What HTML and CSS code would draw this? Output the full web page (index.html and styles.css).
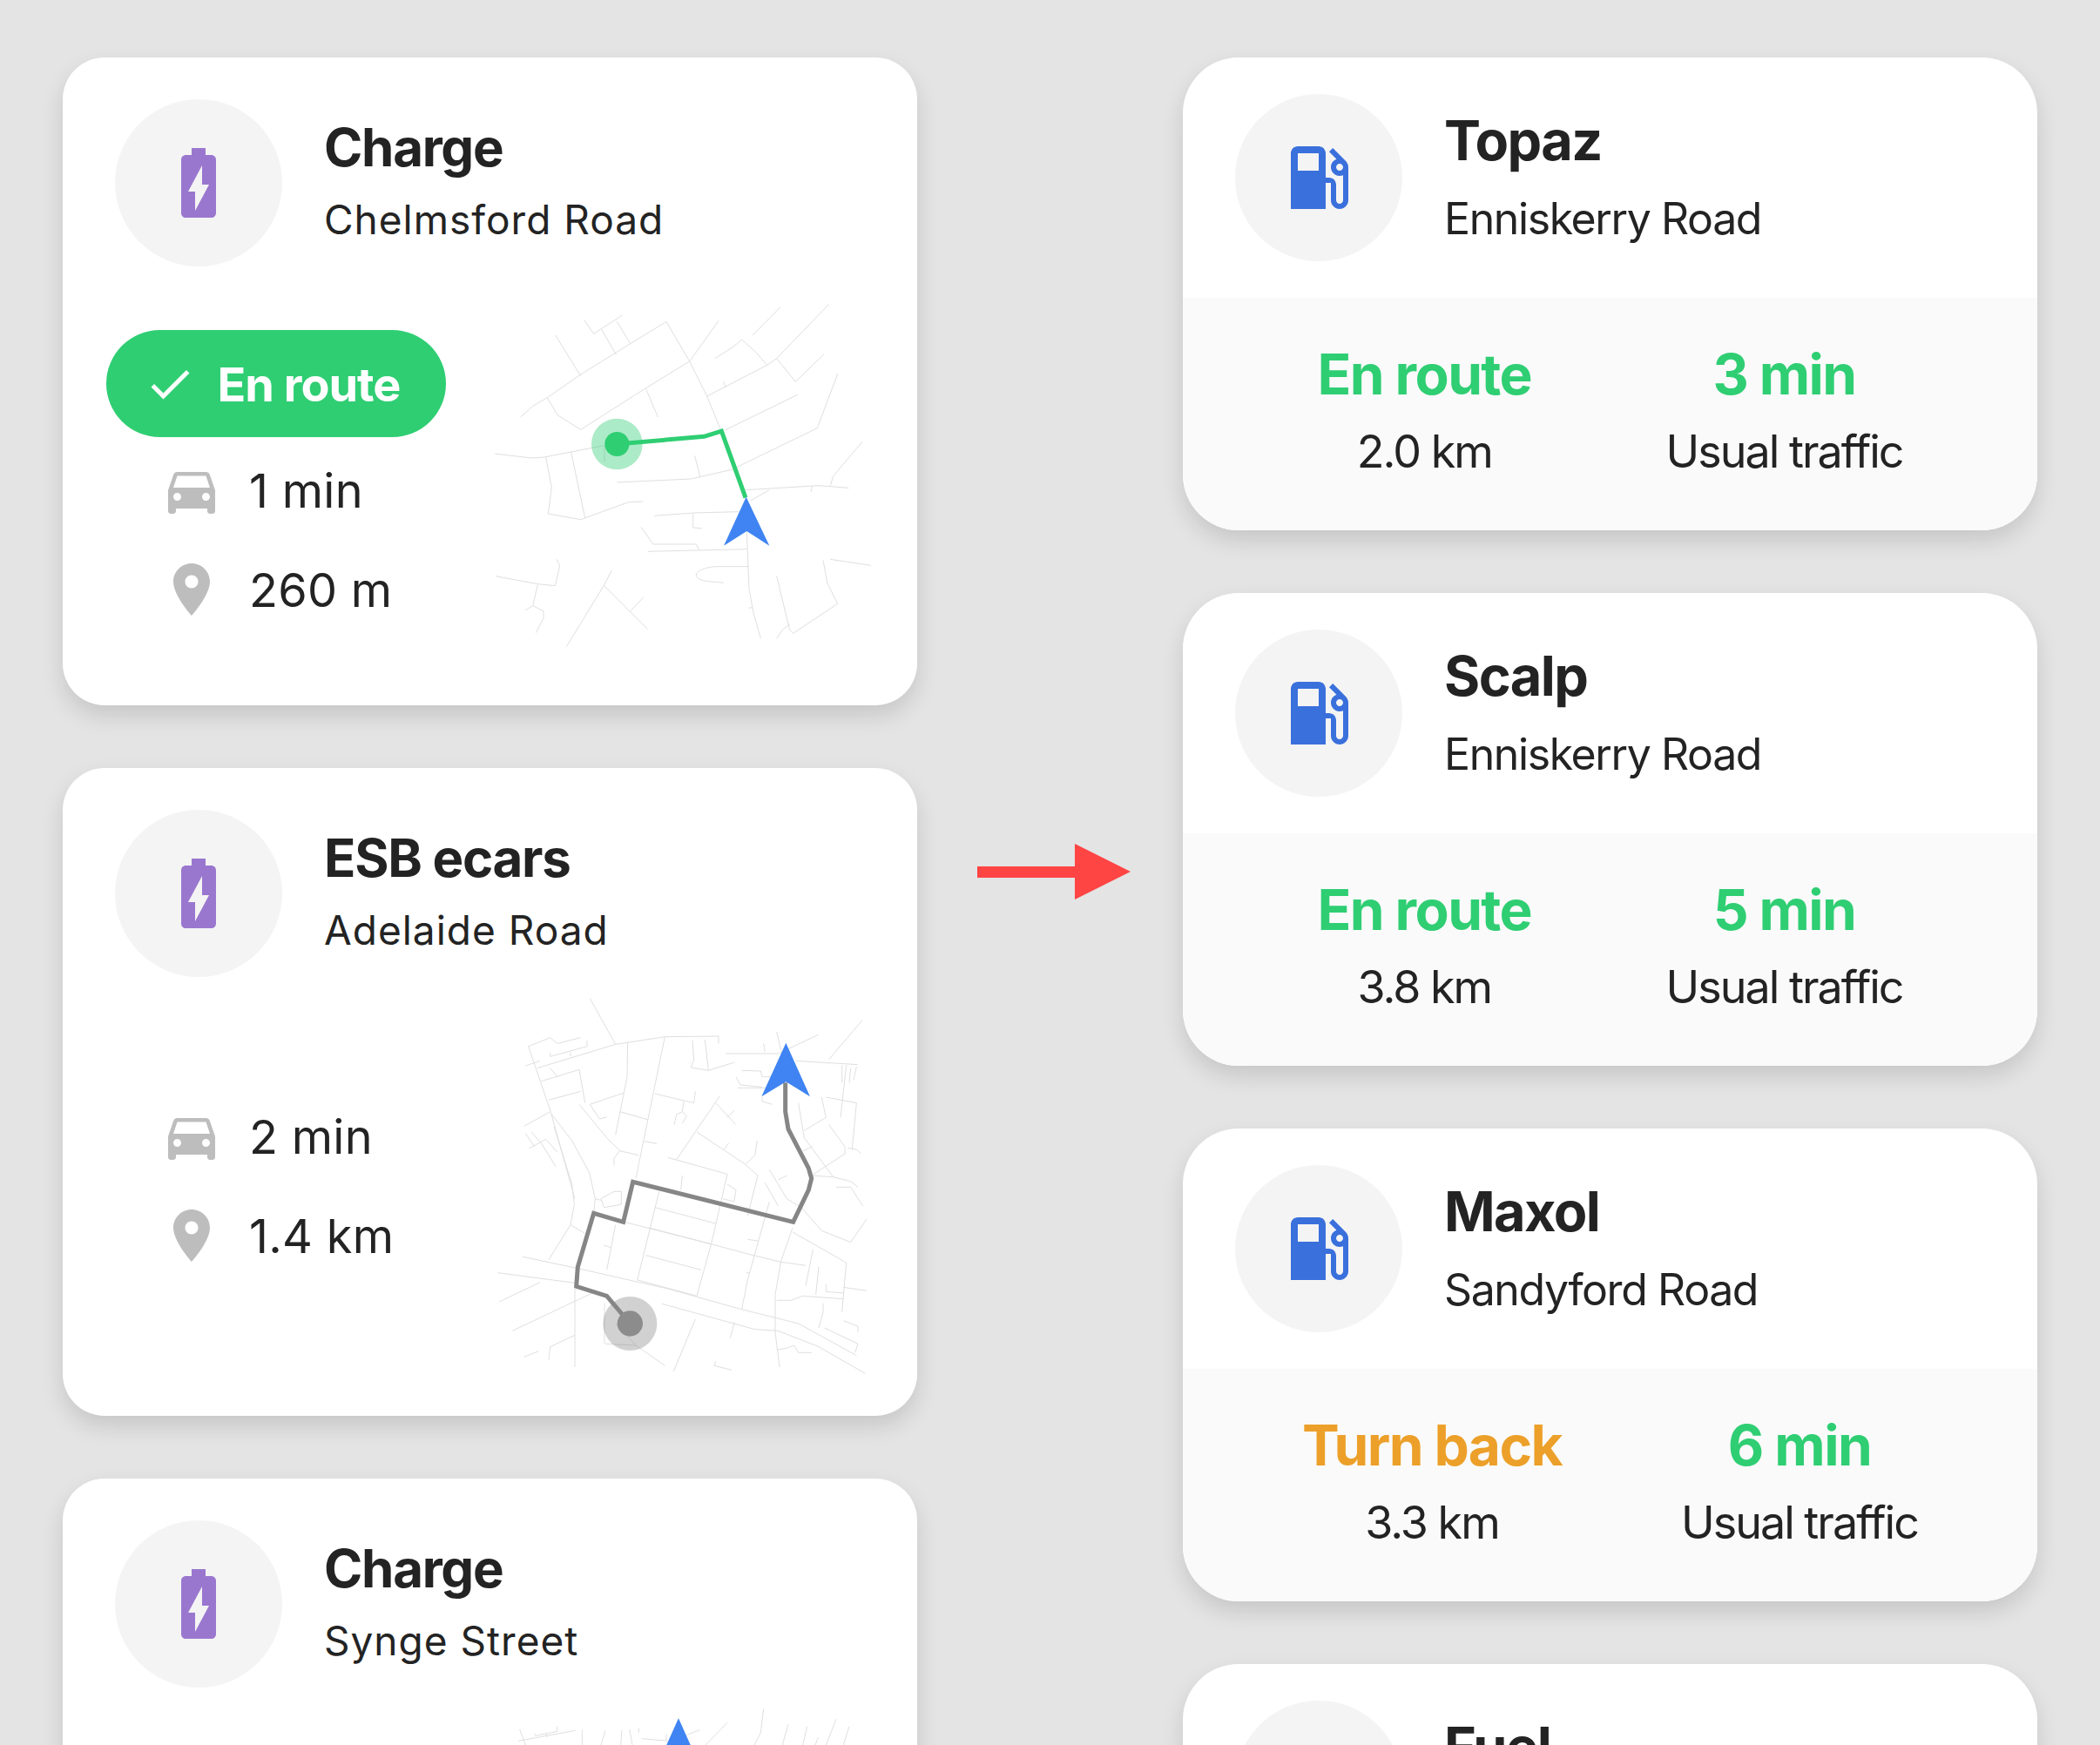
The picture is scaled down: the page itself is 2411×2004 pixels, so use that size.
FILE: index.html
```html
<!DOCTYPE html>
<html lang="en">
<head>
<meta charset="utf-8">
<title>Charging and fuel stops</title>
<link rel="stylesheet" href="styles.css">
</head>
<body>
<svg class="defs" aria-hidden="true">
  <symbol id="i-battery" viewBox="0 0 24 24"><path d="M15.67 4H14V2h-4v2H8.33C7.6 4 7 4.6 7 5.33v15.33C7 21.4 7.6 22 8.33 22h7.33c.74 0 1.34-.6 1.34-1.33V5.33C17 4.6 16.4 4 15.67 4zM11 20v-5.5H9L13 7v5.5h2L11 20z"/></symbol>
  <symbol id="i-fuel" viewBox="0 0 24 24"><path d="M19.77 7.23l.01-.01-3.72-3.72L15 4.56l2.11 2.11c-.94.36-1.61 1.26-1.61 2.33 0 1.38 1.12 2.5 2.5 2.5.36 0 .69-.08 1-.21v7.21c0 .55-.45 1-1 1s-1-.45-1-1V14c0-1.1-.9-2-2-2h-1V5c0-1.1-.9-2-2-2H6c-1.1 0-2 .9-2 2v16h10v-7.5h1.5v5c0 1.38 1.12 2.5 2.5 2.5s2.5-1.12 2.5-2.5V9c0-.69-.28-1.32-.73-1.77zM12 10H6V5h6v5zm6 0c-.55 0-1-.45-1-1s.45-1 1-1 1 .45 1 1-.45 1-1 1z"/></symbol>
  <symbol id="i-car" viewBox="0 0 24 24"><path d="M18.92 6.01C18.72 5.42 18.16 5 17.5 5h-11c-.66 0-1.21.42-1.42 1.01L3 12v8c0 .55.45 1 1 1h1c.55 0 1-.45 1-1v-1h12v1c0 .55.45 1 1 1h1c.55 0 1-.45 1-1v-8l-2.08-5.99zM6.5 16c-.83 0-1.5-.67-1.5-1.5S5.67 13 6.5 13s1.5.67 1.5 1.5S7.33 16 6.5 16zm11 0c-.83 0-1.5-.67-1.5-1.5s.67-1.5 1.5-1.5 1.5.67 1.5 1.5-.67 1.5-1.5 1.5zM5 11l1.5-4.5h11L19 11H5z"/></symbol>
  <symbol id="i-place" viewBox="0 0 24 24"><path d="M12 2C8.13 2 5 5.13 5 9c0 5.25 7 13 7 13s7-7.75 7-13c0-3.87-3.13-7-7-7zm0 9.5c-1.38 0-2.5-1.12-2.5-2.5s1.12-2.5 2.5-2.5 2.5 1.12 2.5 2.5-1.12 2.5-2.5 2.5z"/></symbol>
  <symbol id="i-check" viewBox="0 0 24 24"><path d="M9 16.17L4.83 12l-1.42 1.41L9 19 21 7l-1.41-1.41z"/></symbol>
</svg>

<main class="board">
  <section class="column">
    <article class="card">
      <header class="head">
        <span class="badge"><svg class="icon-lg charge"><use href="#i-battery"/></svg></span>
        <div class="names"><h2 class="title">Charge</h2><p class="place">Chelmsford Road</p></div>
      </header>
      <div class="body">
        <div class="facts">
          <div class="pill"><svg class="icon-check"><use href="#i-check"/></svg><span>En route</span></div>
          <div class="fact"><svg class="icon-md"><use href="#i-car"/></svg><span>1 min</span></div>
          <div class="fact"><svg class="icon-md"><use href="#i-place"/></svg><span>260 m</span></div>
        </div>
        <svg class="map" viewBox="0 -72 1440 1440" aria-hidden="true">
          <g class="roads">
            <polyline points="173,447 214,410 265,380 380,300 550,195 675,118 755,255 815,375 862,490"/>
            <polyline points="265,380 300,440 340,465 380,490 600,350 755,255 855,115"/>
            <polyline points="293,165 380,305"/>
            <polyline points="392,112 425,160 523,96"/>
            <polyline points="452,145 502,232"/>
            <polyline points="505,118 552,195"/>
            <polyline points="605,350 646,447"/>
            <polyline points="815,375 1022,268 1055,245 1235,58"/>
            <polyline points="843,245 905,205 935,180 985,225 1022,268"/>
            <polyline points="1055,245 1120,325 1218,230"/>
            <polyline points="972,165 1068,68"/>
            <polyline points="872,325 880,345"/>
            <polyline points="875,493 1127,370"/>
            <polyline points="85,573 210,588 255,585 460,545"/>
            <polyline points="260,585 280,690 268,780 380,800 545,740 595,738"/>
            <polyline points="347,567 395,795"/>
            <polyline points="462,545 462,600"/>
            <polyline points="505,672 760,660 900,628 1195,485 1265,298"/>
            <polyline points="773,580 792,655"/>
            <polyline points="948,698 1200,683 1303,691"/>
            <polyline points="965,735 1030,698"/>
            <polyline points="1240,683 1250,650 1350,532"/>
            <polyline points="1178,685 1173,705"/>
            <polyline points="633,787 770,777 925,773"/>
            <polyline points="767,780 767,828 798,830"/>
            <polyline points="588,826 630,885 778,885 788,905"/>
            <polyline points="612,910 952,902"/>
            <polyline points="952,840 960,1040 975,1120 1000,1210"/>
            <path d="M872 1018C830 1012 778 1015 778 990C778 975 820 962 850 962H958"/>
            <polyline points="958,1105 970,1103"/>
            <polyline points="1055,995 1100,1180 1112,1192 1265,1090 1230,1020 1215,940"/>
            <polyline points="1100,1160 1075,1180 1055,1210"/>
            <polyline points="1240,937 1380,958"/>
            <polyline points="87,995 232,1022 292,1028 308,960 298,937"/>
            <polyline points="232,1025 215,1097 190,1112"/>
            <polyline points="215,1097 252,1115 252,1140 226,1190"/>
            <polyline points="487,975 460,1027 331,1238"/>
            <polyline points="460,1027 610,1177"/>
            <polyline points="552,1115 597,1067"/>
          </g>
          <circle class="halo-green" cx="505" cy="540" r="88"/>
          <polyline class="route route-green" points="505,540 805,514 865,495 948,725"/>
          <circle class="dot-green" cx="505" cy="540" r="42"/>
          <polygon class="nav" points="950,722 1030,890 952,840 873,890"/>
        </svg>
      </div>
    </article>

    <article class="card">
      <header class="head">
        <span class="badge"><svg class="icon-lg charge"><use href="#i-battery"/></svg></span>
        <div class="names"><h2 class="title">ESB ecars</h2><p class="place">Adelaide Road</p></div>
      </header>
      <div class="body">
        <div class="facts">
          <div class="fact"><svg class="icon-md"><use href="#i-car"/></svg><span>2 min</span></div>
          <div class="fact"><svg class="icon-md"><use href="#i-place"/></svg><span>1.4 km</span></div>
        </div>
        <svg class="map" viewBox="-30 6 1440 1440" aria-hidden="true">
          <g class="roads">
            <polyline points="382,80 470,238"/>
            <polyline points="170,245 245,215 270,235 350,215"/>
            <polyline points="170,245 245,465 330,770"/>
            <polyline points="160,312 210,295"/>
            <polyline points="200,320 470,238 510,232 640,212 825,210 825,235"/>
            <polyline points="245,265 245,280 372,245 372,225"/>
            <polyline points="315,265 315,280"/>
            <polyline points="215,365 345,325 365,440"/>
            <polyline points="245,320 270,350"/>
            <polyline points="240,430 350,400"/>
            <polyline points="155,520 245,470"/>
            <polyline points="160,545 190,590"/>
            <polyline points="180,540 215,580"/>
            <polyline points="172,597 230,565 270,610"/>
            <polyline points="215,580 265,660"/>
            <polyline points="250,480 270,505 320,570 380,680 400,770 395,820"/>
            <polyline points="258,520 320,720 328,790 315,860 240,980"/>
            <polyline points="315,860 365,890"/>
            <polyline points="345,445 440,560 485,605 550,620"/>
            <polyline points="382,445 415,495 440,488"/>
            <polyline points="382,445 440,425 500,405"/>
            <polyline points="512,232 510,350 470,550"/>
            <polyline points="485,470 580,497"/>
            <polyline points="640,212 540,700"/>
            <polyline points="570,572 612,580"/>
            <polyline points="605,408 740,440 745,400"/>
            <polyline points="705,435 700,470 680,480 672,515"/>
            <polyline points="700,470 715,485 700,510"/>
            <polyline points="735,225 740,290 730,318 790,328 880,300"/>
            <polyline points="778,222 790,328"/>
            <polyline points="485,605 465,630 465,655"/>
            <polyline points="830,415 680,635"/>
            <polyline points="815,440 885,515"/>
            <polyline points="880,465 855,490"/>
            <polyline points="750,540 915,650 960,690 925,830"/>
            <polyline points="860,578 845,600"/>
            <polyline points="958,570 950,620 920,650"/>
            <polyline points="650,628 855,685 800,925 750,1105"/>
            <polyline points="700,690 695,740"/>
            <polyline points="855,720 885,740 878,780 840,770"/>
            <polyline points="620,745 565,970 545,1050 750,1105"/>
            <polyline points="605,800 815,855"/>
            <polyline points="585,870 795,925"/>
            <polyline points="575,965 765,1015"/>
            <polyline points="500,850 795,925 945,965 1040,988 1125,1000"/>
            <polyline points="985,715 1030,795"/>
            <polyline points="1000,670 1060,770 1110,800 1180,880 1280,920 1335,840"/>
            <polyline points="1030,705 1060,690"/>
            <polyline points="1000,780 925,1050 905,1150"/>
            <polyline points="925,910 960,915"/>
            <polyline points="920,1025 930,1025"/>
            <polyline points="1080,870 1040,985 1020,1100 1020,1230 1035,1350"/>
            <polyline points="1080,885 1265,990 1250,1160"/>
            <polyline points="1150,945 1125,1070"/>
            <polyline points="1170,1005 1160,1100"/>
            <polyline points="1195,1065 1195,1090 1255,1095"/>
            <polyline points="1255,1075 1335,1087"/>
            <polyline points="1025,1120 1075,1120 1115,1105 1255,1115"/>
            <polyline points="1185,1130 1185,1160 1170,1215"/>
            <polyline points="150,970 340,1010 650,1080 900,1150 1100,1200 1300,1310"/>
            <polyline points="65,1025 330,1060"/>
            <polyline points="630,1132 950,1220 1030,1225 1170,1280 1330,1372"/>
            <polyline points="70,1125 210,1058"/>
            <polyline points="115,1225 400,1090"/>
            <polyline points="330,1080 330,1350"/>
            <polyline points="432,1130 432,1270"/>
            <polyline points="155,1315 205,1295"/>
            <polyline points="240,1325 245,1280 330,1240"/>
            <polyline points="470,1200 540,1275 640,1345"/>
            <polyline points="435,1270 540,1275"/>
            <polyline points="745,1185 670,1365"/>
            <polyline points="880,1195 865,1250"/>
            <polyline points="815,1330 810,1345 870,1360"/>
            <polyline points="1025,1290 1060,1285 1085,1275 1100,1300 1145,1300"/>
            <polyline points="1190,1215 1305,1270 1295,1300"/>
            <polyline points="1255,1190 1305,1210 1305,1230"/>
            <polygon points="420,770 465,745 490,745 490,790 430,800"/>
            <polyline points="400,770 420,775"/>
            <polyline points="430,930 455,938"/>
            <polyline points="470,860 440,1015"/>
            <polyline points="1100,440 1120,560 1220,695"/>
            <polyline points="1180,420 1195,490 1120,535"/>
            <polyline points="1205,515 1260,590 1260,615 1145,690"/>
            <polyline points="1195,420 1300,440 1285,600"/>
            <polyline points="1265,310 1245,490"/>
            <polyline points="850,270 1030,270 1168,205"/>
            <polyline points="1025,195 1040,260"/>
            <polyline points="980,235 985,265"/>
            <polyline points="1090,295 1305,308"/>
            <polyline points="1205,290 1320,155"/>
            <polyline points="905,328 970,330 975,350 1020,350"/>
            <polyline points="885,350 900,378 975,385"/>
            <polyline points="890,388 1000,388"/>
            <polyline points="975,420 975,435 1010,445"/>
            <polyline points="1145,690 1220,695 1280,710 1305,730"/>
            <polyline points="1230,730 1280,730 1322,795"/>
            <polyline points="1115,605 1150,590"/>
            <polyline points="1270,595 1300,600 1315,615"/>
            <polyline points="1250,310 1250,370"/>
            <polyline points="1280,320 1275,370"/>
            <polyline points="1300,315 1290,360"/>
          </g>
          <circle class="halo-grey" cx="520" cy="1200" r="93"/>
          <polyline class="route route-grey" points="520,1200 440,1105 335,1072 340,1005 395,820 497,850 530,712 1082,850 1135,740 1145,700 1135,665 1065,530 1055,470 1055,370"/>
          <circle class="dot-grey" cx="520" cy="1200" r="44"/>
          <polygon class="nav" points="1057,233 1140,418 1057,367 973,418"/>
        </svg>
      </div>
    </article>

    <article class="card">
      <header class="head">
        <span class="badge"><svg class="icon-lg charge"><use href="#i-battery"/></svg></span>
        <div class="names"><h2 class="title">Charge</h2><p class="place">Synge Street</p></div>
      </header>
      <div class="body">
        <div class="facts"></div>
        <svg class="map" viewBox="-120 -6 1440 1440" aria-hidden="true">
          <g class="roads">
            <polyline points="50,138 70,192"/>
            <polyline points="45,178 242,142"/>
            <polyline points="100,152 105,160 180,145 178,128"/>
            <polyline points="140,152 145,165"/>
            <polyline points="265,140 265,192"/>
            <polyline points="345,142 330,192"/>
            <polyline points="402,140 398,192"/>
            <polyline points="428,138 438,192"/>
            <polyline points="460,133 460,150"/>
            <polyline points="470,170 560,178"/>
            <polyline points="555,155 555,178"/>
            <polyline points="625,158 670,140"/>
            <polyline points="690,192 765,115"/>
            <polyline points="890,68 880,150 858,192"/>
            <polyline points="975,120 955,192"/>
            <polyline points="1040,128 1025,192"/>
            <polyline points="1078,165 1068,192"/>
            <polyline points="1140,103 1105,192"/>
            <polyline points="1185,128 1165,192"/>
          </g>
          <polygon class="nav" points="597,100 680,285 597,234 514,285"/>
        </svg>
      </div>
    </article>
  </section>

  <svg class="arrow" viewBox="0 0 176 64" aria-hidden="true"><path d="M0 26H112V0L176 32L112 64V39H0z"/></svg>

  <section class="column">
    <article class="card card--stop">
      <header class="head head--stop">
        <span class="badge"><svg class="icon-lg fuel"><use href="#i-fuel"/></svg></span>
        <div class="names"><h2 class="title title--stop">Topaz</h2><p class="place place--stop">Enniskerry Road</p></div>
      </header>
      <div class="stats">
        <div class="stat"><strong class="go">En route</strong><span>2.0 km</span></div>
        <div class="stat"><strong class="go">3 min</strong><span>Usual traffic</span></div>
      </div>
    </article>

    <article class="card card--stop">
      <header class="head head--stop">
        <span class="badge"><svg class="icon-lg fuel"><use href="#i-fuel"/></svg></span>
        <div class="names"><h2 class="title title--stop">Scalp</h2><p class="place place--stop">Enniskerry Road</p></div>
      </header>
      <div class="stats">
        <div class="stat"><strong class="go">En route</strong><span>3.8 km</span></div>
        <div class="stat"><strong class="go">5 min</strong><span>Usual traffic</span></div>
      </div>
    </article>

    <article class="card card--stop">
      <header class="head head--stop">
        <span class="badge"><svg class="icon-lg fuel"><use href="#i-fuel"/></svg></span>
        <div class="names"><h2 class="title title--stop">Maxol</h2><p class="place place--stop">Sandyford Road</p></div>
      </header>
      <div class="stats">
        <div class="stat"><strong class="back">Turn back</strong><span>3.3 km</span></div>
        <div class="stat"><strong class="go">6 min</strong><span>Usual traffic</span></div>
      </div>
    </article>

    <article class="card card--stop">
      <header class="head head--stop">
        <span class="badge"><svg class="icon-lg fuel"><use href="#i-fuel"/></svg></span>
        <div class="names"><h2 class="title title--stop">Fuel</h2></div>
      </header>
    </article>
  </section>
</main>
</body>
</html>
```
FILE: styles.css
```css
* { box-sizing: border-box; }
html, body { margin: 0; padding: 0; }
body {
  width: 2411px;
  height: 2004px;
  overflow: hidden;
  background: #e4e4e4;
  color: #232323;
  font-family: Inter, "Liberation Sans", sans-serif;
}
.defs { display: none; }

.board {
  display: flex;
  align-items: flex-start;
  height: 2004px;
  padding: 66px 72px 0;
  overflow: hidden;
}
.column {
  display: flex;
  flex: none;
  flex-direction: column;
  gap: 72px;
  width: 981px;
}
.arrow {
  flex: none;
  align-self: center;
  width: 176px;
  height: 64px;
  margin: 0 60px 68px 69px;
  fill: #ff4444;
}

.card {
  flex: none;
  height: 744px;
  overflow: hidden;
  border-radius: 48px;
  background: #fff;
  box-shadow: 0 12px 26px rgba(0, 0, 0, 0.13);
}
.card--stop { height: 543px; border-radius: 64px; }

.head {
  display: flex;
  gap: 48px;
  height: 240px;
  padding: 48px 0 0 60px;
}
.head--stop { height: 276px; padding-top: 42px; }
.badge {
  display: flex;
  flex: none;
  align-items: center;
  justify-content: center;
  width: 192px;
  height: 192px;
  border-radius: 50%;
  background: #f4f4f4;
}
.icon-lg { width: 96px; height: 96px; }
.charge { fill: #9a77cf; }
.fuel { fill: #3a70dc; }

.names { min-width: 0; }
.title {
  margin: 19px 0 0;
  font-size: 60px;
  line-height: 72px;
  font-weight: 700;
  letter-spacing: -1.3px;
}
.title--stop { margin-top: 17px; font-size: 63px; letter-spacing: -1.6px; }
.place {
  margin: 19px 0 0;
  font-size: 46px;
  line-height: 56px;
  font-weight: 400;
  letter-spacing: 1px;
}
.place--stop { font-size: 50px; letter-spacing: -1.4px; margin-top: 26px; }

.body {
  display: flex;
  height: 504px;
}
.facts {
  display: flex;
  flex: none;
  flex-direction: column;
  justify-content: center;
  width: 468px;
  height: 480px;
  padding-left: 50px;
}
.pill {
  display: flex;
  align-items: center;
  width: 390px;
  height: 123px;
  margin-bottom: 25px;
  padding-left: 42.5px;
  border-radius: 62px;
  background: #2fce73;
  color: #fff;
  font-size: 54px;
  font-weight: 700;
  letter-spacing: -1px;
}
.pill span { padding-top: 2px; }
.icon-check { width: 60px; height: 60px; margin-right: 25px; fill: #fff; }
.fact {
  display: flex;
  align-items: center;
  height: 72px;
  padding-left: 62px;
  font-size: 54px;
  letter-spacing: 0.3px;
}
.fact + .fact { margin-top: 42px; }
.icon-md { width: 72px; height: 72px; margin-right: 30px; fill: #bdbdbd; }

.map { display: block; flex: none; width: 480px; height: 480px; }
.roads polyline, .roads path, .roads polygon {
  fill: none;
  stroke: #dfdfdf;
  stroke-width: 3;
}
.route { fill: none; stroke-width: 15; }
.route-green { stroke: #2fce73; }
.route-grey { stroke: #868686; }
.halo-green { fill: #2fce73; opacity: 0.4; }
.dot-green { fill: #2fce73; }
.halo-grey { fill: #8c8c8c; opacity: 0.4; }
.dot-grey { fill: #8c8c8c; }
.nav { fill: #3f84f2; }

.stats {
  display: flex;
  justify-content: space-evenly;
  height: 267px;
  padding-top: 50px;
  background: #fafafa;
}
.stat {
  display: flex;
  flex-direction: column;
  align-items: center;
}
.stat strong {
  font-size: 64px;
  line-height: 76px;
  font-weight: 700;
  letter-spacing: -1.6px;
}
.stat span {
  margin-top: 20px;
  font-size: 52px;
  line-height: 62px;
  letter-spacing: -2px;
}
.go { color: #2fce73; }
.back { color: #eca029; }
```
